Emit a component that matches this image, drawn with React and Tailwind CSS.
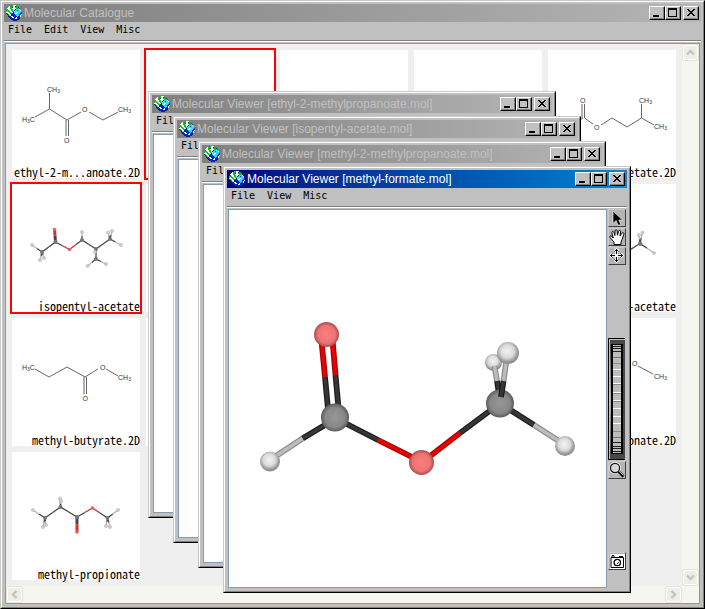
import React from "react";

const GLOBE = [
  ".....GGWWW......",
  "...WGGGWWkGG....",
  "..WWGGkWWGGGk...",
  ".WWWGGWWWWGGCk..",
  ".GWWWGGWWkCCCW..",
  "GGGWWGGWkCCBCCW.",
  "GWGGWWGGWCCCCCC.",
  "WWWGGWWkCCWWCCCB",
  "kGWWGGkBCWWCCCBB",
  ".kGWWkBBBCCCCBBW",
  "..kCWkBBBBCCCBW.",
  "..kBBWWBBBBCBBW.",
  "...kBBWWBBWBBB..",
  "....kBBBBWWBBk..",
  ".....kBBBBBBk...",
  ".......kBBk.....",
];
const GLOBE_COLORS = { k: "#003048", W: "#ffffff", G: "#00c020", C: "#20dcf8", B: "#0020d8" };

function Globe() {
  return (
    <svg viewBox="0 0 16 16" className="size-4 shrink-0" shapeRendering="crispEdges" aria-hidden="true">
      {GLOBE.flatMap((row, y) =>
        [...row].map((c, x) =>
          c === "." ? null : <rect key={`${x}-${y}`} x={x} y={y} width="1" height="1" fill={GLOBE_COLORS[c]} />
        )
      )}
    </svg>
  );
}

function CaptionButton({ label, children }) {
  return (
    <button
      type="button"
      aria-label={label}
      className="h-[14px] w-4 border border-t-white border-l-white border-r-black border-b-black bg-[#c0c0c0]"
    >
      <svg viewBox="0 0 14 12" className="block h-3 w-[14px]" shapeRendering="crispEdges">
        <path d="M0 11.5H13.5V0" fill="none" stroke="#808080" />
        {children}
      </svg>
    </button>
  );
}

function TitleBar({ title, active }) {
  return (
    <header
      className={
        active
          ? "flex h-[18px] items-center bg-linear-to-r from-[#000080] to-[#1084d0] px-[2px] text-white"
          : "flex h-[18px] items-center bg-linear-to-r from-[#808080] to-[#b5b5b5] px-[2px] text-[#c0c0c0]"
      }
    >
      <Globe />
      <h2 className="ml-[2px] flex-1 truncate font-['Liberation_Sans',sans-serif] text-[12px] leading-[18px]">{title}</h2>
      <div className="flex">
        <CaptionButton label="Minimize">
          <path d="M3 8H9V10H3Z" fill="#000" />
        </CaptionButton>
        <CaptionButton label="Maximize">
          <path d="M2 1H11V10H2ZM3 3V9H10V3Z" fill="#000" fillRule="evenodd" />
        </CaptionButton>
      </div>
      <div className="ml-[2px] flex">
        <CaptionButton label="Close">
          <path
            d="M3 2h2v1h1v1h2v-1h1v-1h2v1h-1v1h-1v1h-1v1h1v1h1v1h1v1h-2v-1h-1v-1h-2v1h-1v1h-2v-1h1v-1h1v-1h1v-1h-1v-1h-1v-1h-1z"
            fill="#000"
          />
        </CaptionButton>
      </div>
    </header>
  );
}

function MenuBar({ items }) {
  return (
    <nav className="flex h-5 gap-3 border-b border-b-white px-1 shadow-[inset_0_-1px_0_#808080]">
      {items.map((item) => (
        <button key={item} type="button" className="h-4 font-['DejaVu_Sans_Mono',monospace] text-[10px] leading-4 text-black">
          {item}
        </button>
      ))}
    </nav>
  );
}

function Frame({ className, title, active, menus, children }) {
  return (
    <section className={`border border-t-[#c8c8c8] border-l-[#c8c8c8] border-r-black border-b-black bg-[#c0c0c0] ${className}`}>
      <div className="flex flex-1 flex-col border border-t-white border-l-white border-r-[#808080] border-b-[#808080] p-[2px]">
        <TitleBar title={title} active={active} />
        <MenuBar items={menus} />
        {children}
      </div>
    </section>
  );
}

/* Ball-and-stick and skeletal drawings */

const ATOM = { C: ["#777", 2], O: ["#e06464", 1.8], H: ["#cfcfcf", 1.6] };

function Model({ viewBox, atoms, bonds, oxo }) {
  return (
    <svg viewBox={viewBox} className="block h-[116px] w-32">
      {bonds.map(([a, b], i) => {
        const [ta, xa, ya] = atoms[a];
        const [tb, xb, yb] = atoms[b];
        const mx = (xa + xb) / 2;
        const my = (ya + yb) / 2;
        const tone = { C: "#444", O: "#dc2828", H: "#b4b4b4" };
        const width = oxo === i ? 3 : 1.3;
        return (
          <g key={i} strokeWidth={width}>
            <line x1={xa} y1={ya} x2={mx} y2={my} stroke={tone[ta]} />
            <line x1={mx} y1={my} x2={xb} y2={yb} stroke={tone[tb]} />
          </g>
        );
      })}
      {atoms.map(([t, x, y], i) => (
        <circle key={i} cx={x} cy={y} r={ATOM[t][1]} fill={ATOM[t][0]} stroke={t === "H" ? "#aaa" : "none"} strokeWidth="0.5" />
      ))}
    </svg>
  );
}

function Skeletal({ viewBox, d, marks }) {
  return (
    <svg viewBox={viewBox} className="block h-[116px] w-32">
      <path d={d} fill="none" stroke="#555" strokeWidth="0.9" />
      {marks.map(([kind, x, y]) => (
        <text key={`${x}-${y}`} x={x} y={y} fill="#333" className="font-['Liberation_Sans',sans-serif] text-[7px]">
          {kind === "O" && "O"}
          {kind === "CH3" && (<>CH<tspan fontSize="5" dy="1">3</tspan></>)}
          {kind === "H3C" && (<>H<tspan fontSize="5" dy="1">3</tspan><tspan dy="-1">C</tspan></>)}
        </text>
      ))}
    </svg>
  );
}

const ENTRIES = [
  {
    name: "ethyl-2-m...anoate.2D",
    art: (
      <Skeletal
        viewBox="12 50 128 116"
        d="M49.5 93V109L35 117M49.5 109L67 120L81 112M66 120V136M68.5 120V136M89 112L103 120L118 112"
        marks={[["CH3", 47, 92], ["H3C", 22, 122], ["O", 82, 112], ["CH3", 118, 112], ["O", 64, 143]]}
      />
    ),
  },
  { selected: true },
  {},
  {},
  {
    name: "isopentyl-acetate.2D",
    art: (
      <Skeletal
        viewBox="548 50 128 116"
        d="M582 104V118M584.5 104V118L593 124M601 125L612 118L627 127L641.5 118L654 125M641.5 118V104M583 118L569 127"
        marks={[["O", 580, 103], ["O", 594, 130], ["CH3", 639, 103], ["CH3", 654, 129]]}
      />
    ),
  },
  {
    name: "isopentyl-acetate",
    selected: true,
    art: (
      <Model
        viewBox="12 184 128 116"
        oxo={0}
        atoms={[
          ["O", 54.5, 229.5], ["C", 55.5, 242], ["C", 42, 252], ["H", 32, 245], ["H", 40, 260], ["H", 44, 258],
          ["O", 69.5, 249.5], ["C", 82, 240], ["H", 82, 232], ["C", 96, 249], ["C", 110, 239], ["H", 108, 232.5],
          ["H", 112, 231], ["H", 121, 245], ["C", 96, 259], ["H", 87.5, 266], ["H", 106, 264], ["H", 95, 252],
        ]}
        bonds={[
          [0, 1], [1, 2], [2, 3], [2, 4], [2, 5], [1, 6], [6, 7], [7, 8], [7, 9], [9, 10], [10, 11],
          [10, 12], [10, 13], [9, 14], [14, 15], [14, 16], [9, 17],
        ]}
      />
    ),
  },
  {},
  {},
  {},
  {
    name: "methyl-acetate",
    art: (
      <Model
        viewBox="548 184 128 116"
        atoms={[["O", 622, 255], ["C", 640, 243.5], ["C", 640.5, 244], ["H", 639, 235], ["H", 642.5, 232.5], ["H", 654, 253]]}
        bonds={[[0, 1], [1, 3], [1, 4], [1, 5]]}
      />
    ),
  },
  {
    name: "methyl-butyrate.2D",
    art: (
      <Skeletal
        viewBox="12 318 128 116"
        d="M35 369L49 377L67 367L85 377L98 369M84 377V394M86.5 377V394M106 369L118 376"
        marks={[["H3C", 22, 370], ["O", 100, 370], ["CH3", 118, 380], ["O", 82.5, 401]]}
      />
    ),
  },
  {},
  {},
  {},
  {
    name: "methyl-propionate.2D",
    art: (
      <Skeletal
        viewBox="548 318 128 116"
        d="M638 366L653 374M630 366L616 374"
        marks={[["O", 632, 366], ["CH3", 654, 379]]}
      />
    ),
  },
  {
    name: "methyl-propionate",
    art: (
      <Model
        viewBox="12 452 128 116"
        oxo={7}
        atoms={[
          ["C", 45, 518], ["H", 33, 510], ["H", 43, 527], ["H", 46, 525], ["C", 60.5, 507], ["H", 60, 498.5],
          ["H", 61, 501], ["C", 77, 517], ["O", 77, 532], ["O", 92.5, 508], ["C", 107.5, 518], ["H", 118, 510],
          ["H", 106, 526], ["H", 110, 527],
        ]}
        bonds={[
          [0, 1], [0, 2], [0, 3], [0, 4], [4, 5], [4, 6], [4, 7], [7, 8], [7, 9], [9, 10], [10, 11], [10, 12], [10, 13],
        ]}
      />
    ),
  },
];

function Entry({ name, art, selected }) {
  return (
    <figure className={selected ? "h-32 bg-white outline-2 outline-[#ff0000]" : "h-32 bg-white"}>
      {art}
      {name && (
        <figcaption className="h-3 text-right font-['Noto_Sans_Mono_CJK_JP','Liberation_Mono',monospace] text-[12px] leading-3 whitespace-nowrap text-black">
          {name}
        </figcaption>
      )}
    </figure>
  );
}

function ScrollButton({ label, d }) {
  return (
    <button
      type="button"
      aria-label={label}
      className="m-px size-[15px] shrink-0 rounded-[2px] border border-white bg-[#efeee6] shadow-[0_0_0_1px_#e6e5da]"
    >
      <svg viewBox="0 0 13 13" className="block size-[13px]">
        <path d={d} fill="none" stroke="#c6c5bb" strokeWidth="2.4" />
      </svg>
    </button>
  );
}

function Bond({ from, mid, to, a, b }) {
  const tones = {
    C: ["#1c1c1c", "#363636"],
    O: ["#a00000", "#ee0000"],
    H: ["#8c8c8c", "#bcbcbc"],
  };
  const seg = (p, q, t, key) => (
    <g key={key}>
      <line x1={p[0]} y1={p[1]} x2={q[0]} y2={q[1]} stroke={tones[t][0]} strokeWidth="5.8" />
      <line x1={p[0]} y1={p[1]} x2={q[0]} y2={q[1]} stroke={tones[t][1]} strokeWidth="3.4" />
    </g>
  );
  return (
    <>
      {seg(from, mid, a, "near")}
      {seg(mid, to, b, "far")}
    </>
  );
}

function MethylFormate() {
  return (
    <svg viewBox="229 210 377 377" className="block size-[377px]" role="img" aria-label="methyl-formate">
      <defs>
        <radialGradient id="ball-c">
          <stop offset="0" stopColor="#979797" />
          <stop offset="0.7" stopColor="#888" />
          <stop offset="1" stopColor="#5c5c5c" />
        </radialGradient>
        <radialGradient id="ball-o">
          <stop offset="0" stopColor="#fb7e7e" />
          <stop offset="0.7" stopColor="#ee7474" />
          <stop offset="1" stopColor="#aa4c4c" />
        </radialGradient>
        <radialGradient id="ball-h" cx="0.47" cy="0.42">
          <stop offset="0" stopColor="#f4f4f4" />
          <stop offset="0.6" stopColor="#dadada" />
          <stop offset="1" stopColor="#929292" />
        </radialGradient>
      </defs>
      <Bond from={[321.5, 341]} mid={[325, 377]} to={[328, 409]} a="O" b="C" />
      <Bond from={[332.5, 340]} mid={[335.5, 375]} to={[338.5, 408]} a="O" b="C" />
      <Bond from={[330, 422]} mid={[302.5, 438.5]} to={[273, 458]} a="C" b="H" />
      <Bond from={[339, 420]} mid={[378, 440]} to={[418, 460]} a="C" b="O" />
      <Bond from={[425, 460]} mid={[460, 433]} to={[495, 407]} a="O" b="C" />
      <Bond from={[504, 406]} mid={[534, 425]} to={[562, 443]} a="C" b="H" />
      <circle cx="326.5" cy="334.5" r="12.5" fill="url(#ball-o)" />
      <circle cx="335" cy="417.5" r="14" fill="url(#ball-c)" />
      <circle cx="270" cy="461.5" r="10" fill="url(#ball-h)" />
      <circle cx="421.5" cy="462.5" r="12.5" fill="url(#ball-o)" />
      <circle cx="565" cy="446" r="10" fill="url(#ball-h)" />
      <circle cx="493.5" cy="362.5" r="8.5" fill="url(#ball-h)" />
      <Bond from={[494.5, 366]} mid={[497, 381]} to={[499, 394]} a="H" b="C" />
      <circle cx="500" cy="403.5" r="14" fill="url(#ball-c)" />
      <Bond from={[506.5, 360]} mid={[503.5, 381]} to={[501, 397]} a="H" b="C" />
      <circle cx="508" cy="353" r="11" fill="url(#ball-h)" />
    </svg>
  );
}

function ToolButton({ label, children }) {
  return (
    <button
      type="button"
      aria-label={label}
      className="size-[18px] border border-t-[#cacaca] border-l-[#cacaca] border-r-[#404040] border-b-[#404040] bg-[#b4b4b4]"
    >
      <svg viewBox="0 0 16 16" className="block size-4">
        {children}
      </svg>
    </button>
  );
}

const WHEEL_LINES = [
  [8, "#222"], [10, "#222"], [13, "#222"], [19, "#777"], [25, "#888"], [31, "#fff"], [38, "#fff"], [45, "#fff"],
  [46, "#888"], [54, "#fff"], [55, "#888"], [62, "#fff"], [63, "#888"], [70, "#fff"], [78, "#fff"], [85, "#fff"],
  [93, "#888"], [99, "#777"], [104, "#222"], [108, "#222"], [110, "#222"], [113, "#222"],
];

function ZoomWheel() {
  return (
    <svg viewBox="0 0 18 122" className="block h-[122px] w-[18px]" shapeRendering="crispEdges" role="img" aria-label="Zoom wheel">
      <defs>
        <linearGradient id="rim" x2="0" y2="1">
          <stop offset="0" stopColor="#444" />
          <stop offset="0.5" stopColor="#bbb" />
          <stop offset="1" stopColor="#444" />
        </linearGradient>
      </defs>
      <rect width="17" height="122" fill="#000" />
      <rect x="1" y="1" width="16" height="120" fill="#c0c0c0" />
      <rect x="2" y="2" width="15" height="119" fill="#484848" />
      <rect x="2" y="6" width="1" height="110" fill="url(#rim)" />
      <rect x="3" y="6" width="12" height="110" fill="#000" />
      <rect x="5" y="7" width="8" height="108" fill="#bcbcbc" />
      {WHEEL_LINES.map(([y, color]) => (
        <rect key={y} x="5" y={y} width="8" height="1" fill={color} />
      ))}
    </svg>
  );
}

function ToolColumn() {
  return (
    <div className="flex flex-col justify-between pb-[18px]">
      <div className="flex flex-col gap-px">
        <ToolButton label="Select">
          <path d="M4 1V13.5L7 10.5L9 15H12L9.8 10H13.5Z" fill="#000" stroke="#fff" strokeWidth="0.6" />
        </ToolButton>
        <ToolButton label="Pan">
          <path
            d="M5 15.5V13L1 8.5C.2 7.2 1.6 6.3 2.8 7.2L4.3 9L2.8 3.8C2.7 2.4 4.4 2.1 4.9 3.4L5.9 6.5L6.1 1.8C6.3.4 8 .5 8.1 1.8L8.4 6.2L9.7 2.2C10.1.9 11.7 1.3 11.6 2.6L11 7L13 4.1C13.8 3 15.3 3.8 14.9 5.1L13 10.5L12 13V15.5Z"
            fill="#fff"
            stroke="#000"
          />
        </ToolButton>
        <ToolButton label="Move">
          <g fill="none" stroke="#fff" strokeWidth="2.4">
            <path d="M7.5 1V14M1 7.5H14" />
            <path d="M5.5 3.5L7.5 1.5L9.5 3.5M5.5 11.5L7.5 13.5L9.5 11.5M3.5 5.5L1.5 7.5L3.5 9.5M11.5 5.5L13.5 7.5L11.5 9.5" />
          </g>
          <g fill="none" stroke="#000">
            <path d="M7.5 1V6M7.5 9V14M1 7.5H6M9 7.5H14" />
            <path d="M5.5 3.5L7.5 1.5L9.5 3.5M5.5 11.5L7.5 13.5L9.5 11.5M3.5 5.5L1.5 7.5L3.5 9.5M11.5 5.5L13.5 7.5L11.5 9.5" />
          </g>
        </ToolButton>
      </div>
      <div className="flex flex-col gap-px">
        <ZoomWheel />
        <ToolButton label="Zoom">
          <circle cx="6" cy="6" r="4.4" fill="#d8d8d8" stroke="#fff" strokeWidth="3" />
          <circle cx="6" cy="6" r="4.6" fill="#d8d8d8" stroke="#111" strokeWidth="1.2" />
          <path d="M9.5 9.5L14.5 14.5" stroke="#000" strokeWidth="2.6" />
          <path d="M10 9L14.5 13.5" stroke="#fff" strokeWidth="0.7" />
        </ToolButton>
      </div>
      <ToolButton label="Snapshot">
        <path d="M1 1H16V16H1Z" fill="#fff" />
        <path d="M2 4.5H14.5V14.5H2ZM3 2.5H5V4.5H3ZM10 3.5H14" fill="none" stroke="#000" />
        <circle cx="8.3" cy="9.5" r="3.2" fill="none" stroke="#000" strokeWidth="1.3" />
        <path d="M8 11L10 9" stroke="#000" strokeWidth="0.8" />
      </ToolButton>
    </div>
  );
}

function Viewer({ file, place, active, children }) {
  return (
    <Frame
      className={`absolute w-[408px] ${place}`}
      title={`Molecular Viewer [${file}]`}
      active={active}
      menus={["File", "View", "Misc"]}
    >
      <div className="flex gap-px p-px">
        <div className="h-[379px] flex-1 border border-[#7f9db9] bg-white">{children}</div>
        <ToolColumn />
      </div>
    </Frame>
  );
}

export default function App() {
  return (
    <main className="relative flex min-h-screen">
      <Frame className="flex w-full" title="Molecular Catalogue" menus={["File", "Edit", "View", "Misc"]}>
        <div className="flex flex-1 flex-col p-px">
          <div className="flex flex-1 flex-col border border-[#7f9db9] bg-[#f6f6f1]">
            <div className="flex flex-1">
              <div className="grid flex-1 auto-rows-max grid-cols-[repeat(auto-fill,128px)] content-start gap-[6px] bg-[#efefef] p-[6px]">
                {ENTRIES.map((entry, i) => (
                  <Entry key={i} {...entry} />
                ))}
              </div>
              <div className="flex w-[17px] flex-col justify-between">
                <ScrollButton label="Scroll up" d="M3 8.5L6.5 5L10 8.5" />
                <ScrollButton label="Scroll down" d="M3 4.5L6.5 8L10 4.5" />
              </div>
            </div>
            <div className="flex h-[17px] justify-between pr-[17px]">
              <ScrollButton label="Scroll left" d="M8.5 3L5 6.5L8.5 10" />
              <ScrollButton label="Scroll right" d="M4.5 3L8 6.5L4.5 10" />
            </div>
          </div>
        </div>
      </Frame>
      <Viewer file="ethyl-2-methylpropanoate.mol" place="top-[91px] left-[148px]" />
      <Viewer file="isopentyl-acetate.mol" place="top-[116px] left-[173px]" />
      <Viewer file="methyl-2-methylpropanoate.mol" place="top-[141px] left-[198px]" />
      <Viewer file="methyl-formate.mol" place="top-[166px] left-[223px]" active>
        <MethylFormate />
      </Viewer>
    </main>
  );
}
